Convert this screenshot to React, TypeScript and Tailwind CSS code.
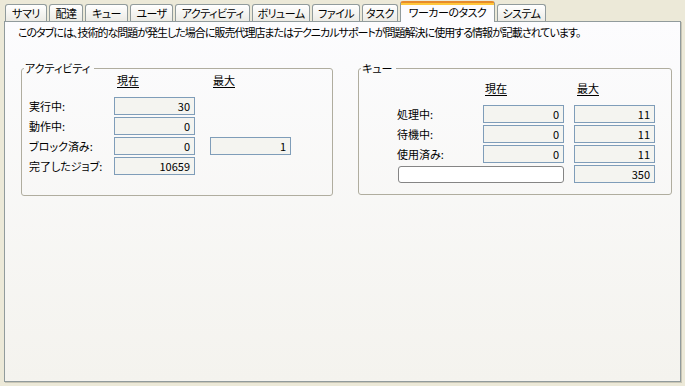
import React from "react";

const tabs = [
  { label: "サマリ", w: "w-[42px]" },
  { label: "配達", w: "w-[34px]" },
  { label: "キュー", w: "w-[43px]" },
  { label: "ユーザ", w: "w-[43px]" },
  { label: "アクティビティ", w: "w-[75px]" },
  { label: "ボリューム", w: "w-[58px]" },
  { label: "ファイル", w: "w-[48px]" },
  { label: "タスク", w: "w-[36px]" },
  { label: "ワーカーのタスク", w: "w-[95px]", active: true },
  { label: "システム", w: "w-[49px]" },
];

function ValueBox({ value, w = "w-[81px]" }: { value?: string; w?: string }) {
  return (
    <div
      className={`${w} h-[18px] border border-[#7f9db9] bg-[#f4f4f0] pr-[4px] text-right leading-[16px]`}
    >
      {value}
    </div>
  );
}

function GroupBox({
  title,
  className,
  children,
}: {
  title: string;
  className: string;
  children: React.ReactNode;
}) {
  return (
    <div className={`relative rounded-[3px] border border-[#b0ad9f] ${className}`}>
      <span className="absolute -top-[8px] left-[2px] bg-[#fbfbfb] pl-[1px] pr-[4px] leading-[14px]">
        {title}
      </span>
      {children}
    </div>
  );
}

export default function App() {
  return (
    <div className="w-[685px] h-[386px] overflow-hidden bg-[#ece9d8] pl-[4px] pr-[4px] text-[11px] text-black font-['Noto_Sans_CJK_JP','Noto_Sans',sans-serif] [font-feature-settings:'palt']">
      {/* tab strip */}
      <div className="flex h-[21px] items-end gap-[2px] pl-[1px] tracking-[-0.5px]">
        {tabs.map((t) =>
          t.active ? (
            <div
              key={t.label}
              className={`${t.w} relative z-10 -mb-[1px] h-[21px] rounded-t-[3px] border-x border-t-2 border-[#919b9c] border-t-[#e68b2c] bg-[#fcfcfe] text-center`}
            >
              <div className="h-[2px] bg-[#ffc73c]" />
              <div className="leading-[15px]">{t.label}</div>
            </div>
          ) : (
            <div
              key={t.label}
              className={`${t.w} h-[17px] rounded-t-[3px] border-x border-t border-[#919b9c] bg-linear-to-b from-white to-[#ecebe5] text-center leading-[16px]`}
            >
              {t.label}
            </div>
          )
        )}
      </div>

      {/* panel */}
      <div className="h-[361px] border border-[#919b9c] bg-linear-to-b from-[#fcfcfe] to-[#f4f3ee] pl-[13px] pt-[3px] shadow-[1px_1px_0_#c9c6b6]">
        <p className="leading-[14px] tracking-[-1px]">
          このタブには、技術的な問題が発生した場合に販売代理店またはテクニカルサポートが問題解決に使用する情報が記載されています。
        </p>

        <div className="ml-[3px] mt-[29px] flex items-start gap-[25px]">
          {/* activity */}
          <GroupBox title="アクティビティ" className="w-[312px] h-[128px] pl-[7px] pt-[4px]">
            <div className="flex leading-[14px]">
              <div className="w-[85px]" />
              <div className="w-[81px] pl-[3px]">
                <span className="underline underline-offset-2">現在</span>
              </div>
              <div className="w-[15px]" />
              <div className="pl-[3px]">
                <span className="underline underline-offset-2">最大</span>
              </div>
            </div>
            <div className="mt-[10px] flex flex-col gap-[2px]">
              {[
                ["実行中:", "30"],
                ["動作中:", "0"],
                ["ブロック済み:", "0", "1"],
                ["完了したジョブ:", "10659"],
              ].map(([label, cur, max]) => (
                <div key={label} className="flex items-center">
                  <div className="w-[85px] leading-[14px]">{label}</div>
                  <ValueBox value={cur} />
                  {max && (
                    <div className="ml-[15px]">
                      <ValueBox value={max} />
                    </div>
                  )}
                </div>
              ))}
            </div>
          </GroupBox>

          {/* queue */}
          <GroupBox title="キュー" className="w-[314px] h-[127px] pl-[38px] pt-[12px]">
            <div className="flex leading-[14px]">
              <div className="w-[86px]" />
              <div className="w-[81px] pl-[2px]">
                <span className="underline underline-offset-2">現在</span>
              </div>
              <div className="w-[10px]" />
              <div className="pl-[3px]">
                <span className="underline underline-offset-2">最大</span>
              </div>
            </div>
            <div className="mt-[10px] flex flex-col gap-[2px]">
              {[
                ["処理中:", "0", "11"],
                ["待機中:", "0", "11"],
                ["使用済み:", "0", "11"],
              ].map(([label, cur, max]) => (
                <div key={label} className="flex items-center">
                  <div className="w-[86px] leading-[14px]">{label}</div>
                  <ValueBox value={cur} />
                  <div className="ml-[10px]">
                    <ValueBox value={max} />
                  </div>
                </div>
              ))}
              <div className="flex items-center">
                <div className="ml-[1px] h-[17px] w-[166px] rounded-[3px] border border-[#858585] bg-white" />
                <div className="ml-[10px]">
                  <ValueBox value="350" />
                </div>
              </div>
            </div>
          </GroupBox>
        </div>
      </div>
    </div>
  );
}
